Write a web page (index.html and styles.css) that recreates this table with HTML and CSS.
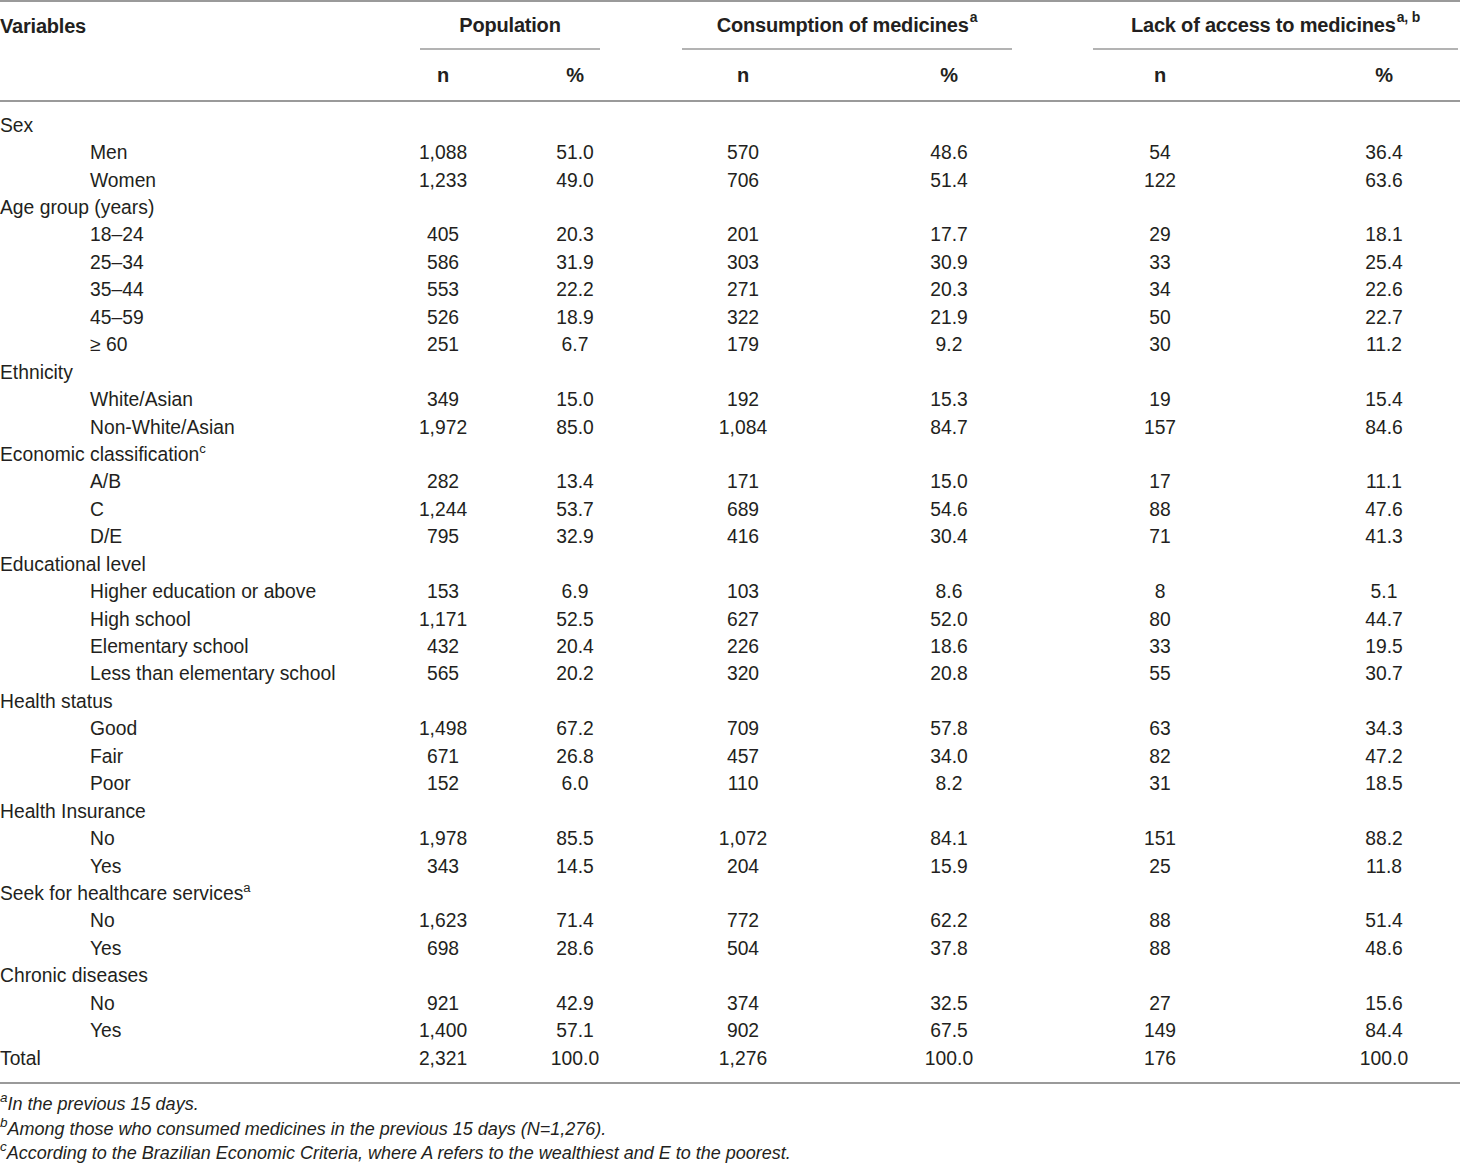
FILE: index.html
```html
<!DOCTYPE html>
<html lang="en">
<head>
<meta charset="utf-8">
<title>Table</title>
<link rel="stylesheet" href="styles.css">
</head>
<body>
<div class="table">
  <div class="head">
    <div class="hrow">
      <div class="hcell var"><span>Variables</span></div>
      <div class="hcell grp g1"><span>Population</span></div>
      <div class="hcell grp g2"><span>Consumption of medicines<sup>a</sup></span></div>
      <div class="hcell grp g3"><span>Lack of access to medicines<sup>a, b</sup></span></div>
    </div>
    <div class="hrow">
      <div class="hcell n1"><span>n</span></div>
      <div class="hcell p1"><span>%</span></div>
      <div class="hcell n2"><span>n</span></div>
      <div class="hcell p2"><span>%</span></div>
      <div class="hcell n3"><span>n</span></div>
      <div class="hcell p3"><span>%</span></div>
    </div>
  </div>
  <div class="body" id="body"></div>
  <div class="notes">
    <p><sup>a</sup>In the previous 15 days.</p>
    <p><sup>b</sup>Among those who consumed medicines in the previous 15 days (N=1,276).</p>
    <p><sup>c</sup>According to the Brazilian Economic Criteria, where A refers to the wealthiest and E to the poorest.</p>
  </div>
</div>
<script src="script.js"></script>
</body>
</html>
```
FILE: script.js
```js
var rows = [
  ["Sex"],
  ["Men","1,088","51.0","570","48.6","54","36.4"],
  ["Women","1,233","49.0","706","51.4","122","63.6"],
  ["Age group (years)"],
  ["18–24","405","20.3","201","17.7","29","18.1"],
  ["25–34","586","31.9","303","30.9","33","25.4"],
  ["35–44","553","22.2","271","20.3","34","22.6"],
  ["45–59","526","18.9","322","21.9","50","22.7"],
  ["≥ 60","251","6.7","179","9.2","30","11.2"],
  ["Ethnicity"],
  ["White/Asian","349","15.0","192","15.3","19","15.4"],
  ["Non-White/Asian","1,972","85.0","1,084","84.7","157","84.6"],
  ["Economic classification|c"],
  ["A/B","282","13.4","171","15.0","17","11.1"],
  ["C","1,244","53.7","689","54.6","88","47.6"],
  ["D/E","795","32.9","416","30.4","71","41.3"],
  ["Educational level"],
  ["Higher education or above","153","6.9","103","8.6","8","5.1"],
  ["High school","1,171","52.5","627","52.0","80","44.7"],
  ["Elementary school","432","20.4","226","18.6","33","19.5"],
  ["Less than elementary school","565","20.2","320","20.8","55","30.7"],
  ["Health status"],
  ["Good","1,498","67.2","709","57.8","63","34.3"],
  ["Fair","671","26.8","457","34.0","82","47.2"],
  ["Poor","152","6.0","110","8.2","31","18.5"],
  ["Health Insurance"],
  ["No","1,978","85.5","1,072","84.1","151","88.2"],
  ["Yes","343","14.5","204","15.9","25","11.8"],
  ["Seek for healthcare services|a"],
  ["No","1,623","71.4","772","62.2","88","51.4"],
  ["Yes","698","28.6","504","37.8","88","48.6"],
  ["Chronic diseases"],
  ["No","921","42.9","374","32.5","27","15.6"],
  ["Yes","1,400","57.1","902","67.5","149","84.4"],
  ["Total|","2,321","100.0","1,276","100.0","176","100.0"]
];
var body = document.getElementById("body");
var cls = ["n1","p1","n2","p2","n3","p3"];
rows.forEach(function (r) {
  var row = document.createElement("div");
  row.className = "row";
  var lab = document.createElement("div");
  var text = r[0];
  var sup = null;
  if (text.indexOf("|") >= 0) { sup = text.split("|")[1]; text = text.split("|")[0]; }
  lab.className = "label" + ((r.length > 1 && r[0].indexOf("|") < 0) ? " sub" : "");
  lab.textContent = text;
  if (sup) { var s = document.createElement("sup"); s.textContent = sup; lab.appendChild(s); }
  row.appendChild(lab);
  for (var i = 1; i < r.length; i++) {
    var c = document.createElement("div");
    c.className = "num " + cls[i - 1];
    var sp = document.createElement("span");
    sp.textContent = r[i];
    c.appendChild(sp);
    row.appendChild(c);
  }
  body.appendChild(row);
});
```
FILE: styles.css
```css
html, body {
  margin: 0;
  padding: 0;
  background: #fff;
}
body {
  font-family: "Liberation Sans", Arial, sans-serif;
  color: #231f20;
}
.table {
  width: 1460px;
}
.head {
  border-top: 2px solid #9a9a9a;
  border-bottom: 2px solid #9a9a9a;
}
.hrow, .row {
  display: grid;
  grid-template-columns: 420px 46px 84px 50px 82px 122px 82px 126px 81px 134px 83px 148px 2px;
}
.hrow {
  height: 48px;
  align-items: center;
}
.hrow + .hrow {
  height: 50px;
}
.hcell {
  font-weight: bold;
  font-size: 20px;
  display: flex;
  justify-content: center;
  white-space: nowrap;
  letter-spacing: -0.2px;
}
.hcell.var {
  grid-column: 1;
  justify-content: flex-start;
}
.grp {
  align-self: stretch;
  align-items: center;
  border-bottom: 2px solid #b3b3b3;
}
.g1 { grid-column: 2 / 5; }
.g2 { grid-column: 6 / 9; }
.g3 { grid-column: 10 / 13; }
.n1 { grid-column: 2; }
.p1 { grid-column: 4; }
.n2 { grid-column: 6; }
.p2 { grid-column: 8; }
.n3 { grid-column: 10; }
.p3 { grid-column: 12; }
sup {
  font-size: 0.68em;
  line-height: 0;
  vertical-align: 0.6em;
}
.hcell sup {
  font-size: 0.7em;
  margin-left: 1px;
  vertical-align: 0.65em;
}
.body {
  padding: 10px 0 10px;
  border-bottom: 2px solid #9a9a9a;
}
.row {
  height: 27.45px;
  align-items: center;
  font-size: 19.3px;
}
.label {
  grid-column: 1;
  white-space: nowrap;
}
.label.sub {
  padding-left: 90px;
}
.num {
  display: flex;
  justify-content: center;
  white-space: nowrap;
}
.notes {
  padding-top: 8px;
}
.notes p {
  margin: 0;
  font-size: 18px;
  font-style: italic;
  line-height: 24.5px;
}
.notes sup {
  font-size: 0.75em;
  vertical-align: 0.6em;
}
```
